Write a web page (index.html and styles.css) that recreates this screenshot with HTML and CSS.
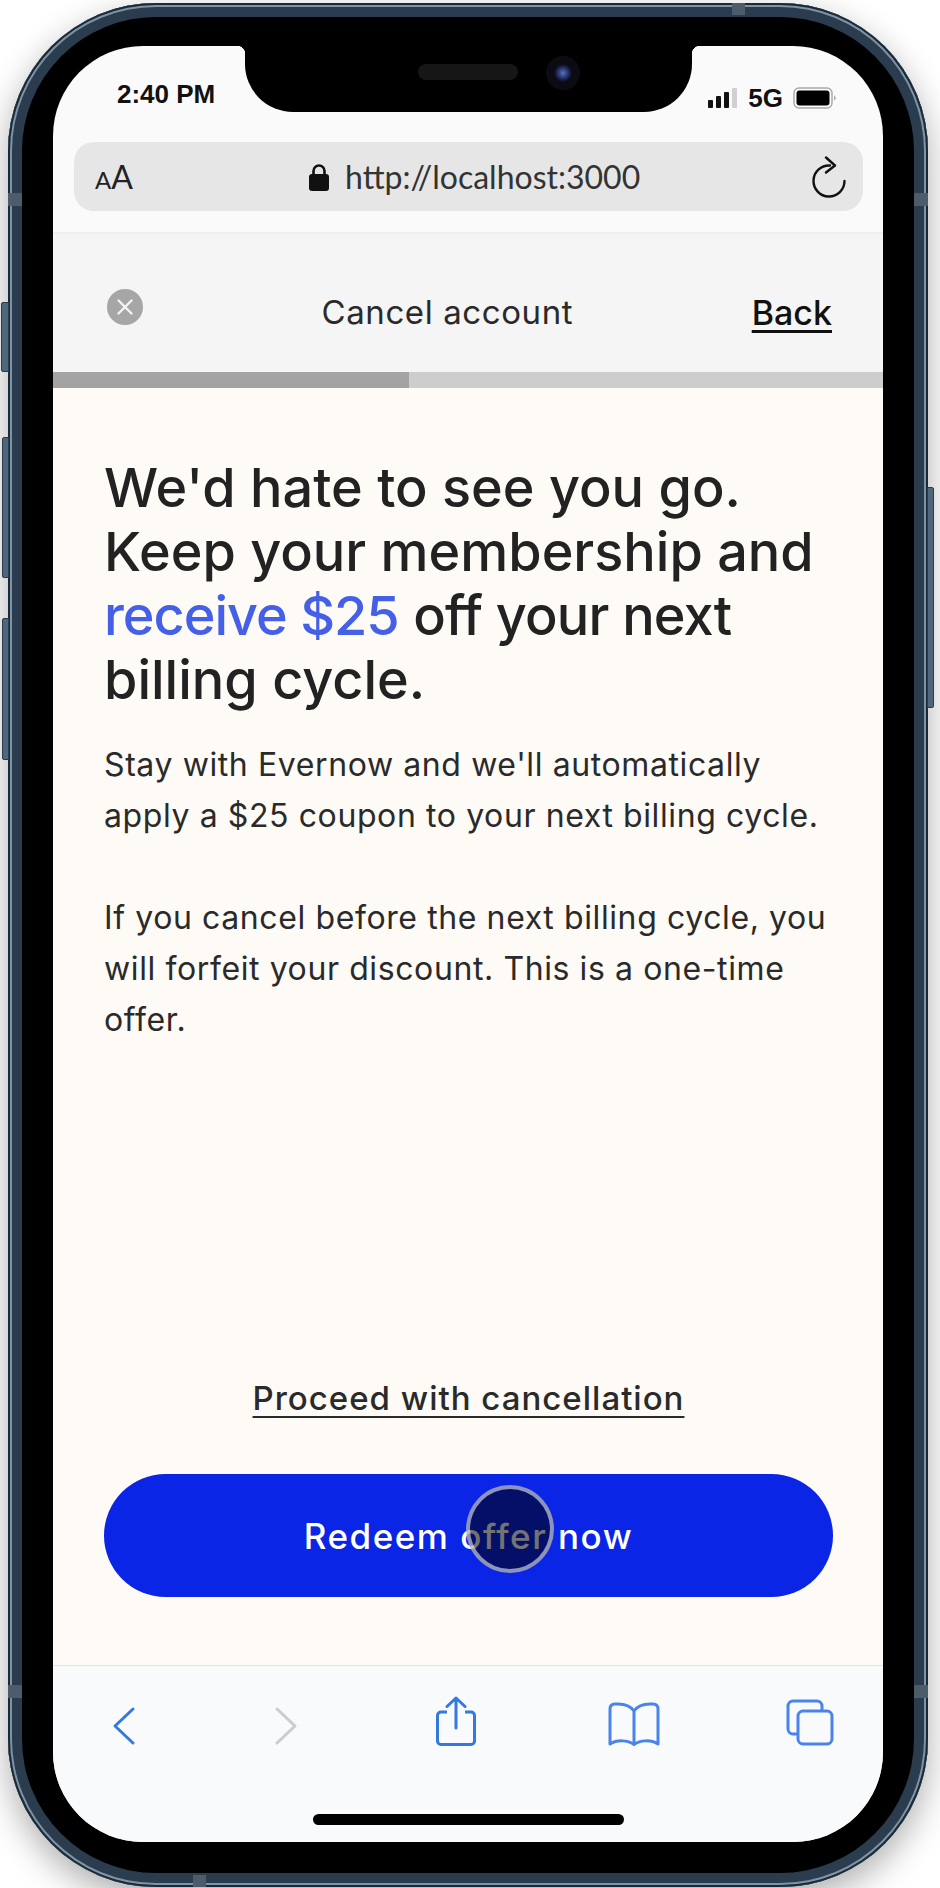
FILE: index.html
```html
<!DOCTYPE html>
<html lang="en">
<head>
  <meta charset="UTF-8">
  <meta name="viewport" content="width=device-width, initial-scale=1.0">
  <title>Cancel account</title>
  <link rel="stylesheet" href="styles.css">
</head>
<body>
  <div class="phone">
    <!-- Hardware buttons and antenna bands -->
    <span class="side-btn mute"></span>
    <span class="side-btn vol-up"></span>
    <span class="side-btn vol-down"></span>
    <span class="side-btn power"></span>
    <span class="band band-top"></span>
    <span class="band band-bottom"></span>
    <span class="band band-left-a"></span>
    <span class="band band-left-b"></span>
    <span class="band band-right-a"></span>
    <span class="band band-right-b"></span>

    <div class="screen">
      <div class="notch">
        <span class="speaker"></span>
        <span class="camera"></span>
      </div>

      <div class="browser-top">
        <div class="status-bar">
          <span class="clock">2:40 PM</span>
          <div class="status-icons">
            <svg class="signal" width="30" height="20" viewBox="0 0 30 20">
              <rect x="0" y="12" width="5" height="8" rx="1" fill="#111"/>
              <rect x="8" y="8" width="5" height="12" rx="1" fill="#111"/>
              <rect x="16" y="4" width="5" height="16" rx="1" fill="#111"/>
              <rect x="24" y="0" width="5" height="20" rx="1" fill="#d0d0d0"/>
            </svg>
            <span class="network">5G</span>
            <svg class="battery" width="44" height="22" viewBox="0 0 44 22">
              <rect x="1" y="1" width="38" height="20" rx="5" fill="none" stroke="#aaa" stroke-width="1.5"/>
              <rect x="3.5" y="3.5" width="33" height="15" rx="3" fill="#000"/>
              <path d="M41 8 L43 11 L41 14 Z" fill="#aaa"/>
            </svg>
          </div>
        </div>
        <div class="url-bar">
          <span class="aa"><small>A</small>A</span>
          <div class="address">
            <svg class="lock" width="20" height="28" viewBox="0 0 20 28">
              <path d="M4.5 12 V8 a5.5 5.5 0 0 1 11 0 V12" fill="none" stroke="#111" stroke-width="2.6"/>
              <rect x="0" y="11" width="20" height="17" rx="3" fill="#111"/>
            </svg>
            <span>http://localhost:3000</span>
          </div>
          <svg class="reload" width="36" height="42" viewBox="0 0 36 42">
            <path d="M19 9.5 A15.5 15.5 0 1 0 33.5 25" fill="none" stroke="#111" stroke-width="2.4" stroke-linecap="round"/>
            <path d="M15 1.5 L24 9.5 L15 16.5" fill="none" stroke="#111" stroke-width="2.4" stroke-linecap="round" stroke-linejoin="round"/>
          </svg>
        </div>
      </div>

      <header class="app-header">
        <svg class="close-icon" width="36" height="36" viewBox="0 0 36 36">
          <circle cx="18" cy="18" r="18" fill="#a6a6a6"/>
          <path d="M11.5 11.5 L24.5 24.5 M24.5 11.5 L11.5 24.5" stroke="#f4f4f4" stroke-width="2.4" stroke-linecap="round"/>
        </svg>
        <span class="app-title">Cancel account</span>
        <a class="back-link" href="#">Back</a>
      </header>

      <div class="progress"><div class="progress-fill"></div></div>

      <main class="offer">
        <h1>We'd hate to see you go. Keep your membership and <span class="accent">receive $25</span> <span class="tight">off your next</span> billing cycle.</h1>
        <p>Stay with Evernow and we'll automatically apply a $25 coupon to your next billing cycle.</p>
        <p>If you cancel before the next billing cycle, you will forfeit your discount. This is a one-time offer.</p>
        <div class="actions">
          <a class="proceed" href="#">Proceed with cancellation</a>
          <a class="redeem" href="#">Redeem offer now<span class="touch-dot"></span></a>
        </div>
      </main>

      <footer class="toolbar">
        <div class="toolbar-icons">
          <svg width="24" height="40" viewBox="0 0 24 40">
            <path d="M21 3 L3 20 L21 37" fill="none" stroke="#3478e0" stroke-width="3" stroke-linecap="round" stroke-linejoin="round"/>
          </svg>
          <svg width="24" height="40" viewBox="0 0 24 40">
            <path d="M3 3 L21 20 L3 37" fill="none" stroke="#cccccc" stroke-width="3" stroke-linecap="round" stroke-linejoin="round"/>
          </svg>
          <svg width="40" height="50" viewBox="0 0 40 50">
            <path d="M11 16 H5 a3.500 3.500 0 0 0 -3.500 3.500 V45 a3.500 3.500 0 0 0 3.500 3.500 H35 a3.500 3.500 0 0 0 3.500 -3.500 V19.500 a3.500 3.500 0 0 0 -3.500 -3.500 H29" fill="none" stroke="#3478e0" stroke-width="3"/>
            <path d="M20 32 V2.500 M11 10.500 L20 2 L29 10.500" fill="none" stroke="#3478e0" stroke-width="3" stroke-linecap="round" stroke-linejoin="round"/>
          </svg>
          <svg width="52" height="44" viewBox="0 0 52 44">
            <path d="M26 9 C22 3 14 1.500 7 2 C4 2.200 2 4 2 7 V42 C9 37.500 20 38 26 42.500 C32 38 43 37.500 50 42 V7 C50 4 48 2.200 45 2 C38 1.500 30 3 26 9 Z M26 9 V42.500" fill="none" stroke="#4a84ea" stroke-width="3" stroke-linejoin="round"/>
          </svg>
          <svg width="48" height="47" viewBox="0 0 48 47">
            <path d="M36 12 V7 a5 5 0 0 0 -5 -5 H7 a5 5 0 0 0 -5 5 V30 a5 5 0 0 0 5 5 H12" fill="none" stroke="#4a84ea" stroke-width="3"/>
            <rect x="12" y="12" width="34" height="33" rx="5" fill="none" stroke="#4a84ea" stroke-width="3"/>
          </svg>
        </div>
        <div class="home-indicator"></div>
      </footer>
    </div>
  </div>
</body>
</html>
```

FILE: styles.css
```css
/* Reset and basic styles */
body {
  margin: 0;
  width: 940px;
  height: 1888px;
  overflow: hidden;
  background-color: #fff;
  font-family: 'Inter', 'Liberation Sans', sans-serif;
  color: #222;
}

a {
  color: inherit;
  text-decoration-thickness: 2px;
  text-underline-offset: 6px;
}

/* Device frame */
.phone {
  position: relative;
  box-sizing: border-box;
  width: 920px;
  height: 1884px;
  margin: 3px 0 0 8px;
  padding: 43px 45px 45px 45px;
  border-radius: 148px;
  background-color: #000;
  box-shadow:
    inset 0 0 0 2px #1c2a38,
    inset 0 0 0 4px #7d93a6,
    inset 0 0 0 14px #2a3c4e,
    0 12px 34px rgba(0, 0, 0, 0.32);
}

.side-btn {
  position: absolute;
  background-color: #50677b;
  border: 1px solid #2a3c4e;
  box-sizing: border-box;
  border-radius: 2px 0 0 2px;
}

.mute { left: -7px; top: 299px; width: 8px; height: 70px; }
.vol-up { left: -6px; top: 434px; width: 7px; height: 141px; }
.vol-down { left: -6px; top: 615px; width: 7px; height: 142px; }
.power { right: -6px; top: 484px; width: 7px; height: 221px; border-radius: 0 2px 2px 0; }

.band {
  position: absolute;
  background-color: #4c5c6b;
}

.band-top { left: 724px; top: 0; width: 13px; height: 12px; }
.band-bottom { left: 185px; bottom: 0; width: 13px; height: 12px; }
.band-left-a { left: 0; top: 190px; width: 14px; height: 13px; }
.band-left-b { left: 0; top: 1682px; width: 14px; height: 13px; }
.band-right-a { right: 0; top: 190px; width: 14px; height: 13px; }
.band-right-b { right: 0; top: 1682px; width: 14px; height: 13px; }

/* Screen */
.screen {
  position: relative;
  display: flex;
  flex-direction: column;
  height: 100%;
  border-radius: 90px;
  overflow: hidden;
  background-color: #fafafa;
}

.notch {
  position: absolute;
  left: 192px;
  top: 0;
  width: 447px;
  height: 66px;
  background-color: #000;
  border-radius: 0 0 48px 48px;
}

.notch::before,
.notch::after {
  content: "";
  position: absolute;
  top: 0;
  width: 8px;
  height: 8px;
}

.notch::before {
  left: -8px;
  background: radial-gradient(circle at 0 100%, transparent 8px, #000 8.500px);
}

.notch::after {
  right: -8px;
  background: radial-gradient(circle at 100% 100%, transparent 8px, #000 8.500px);
}

.speaker {
  position: absolute;
  left: 173px;
  top: 18px;
  width: 100px;
  height: 16px;
  border-radius: 8px;
  background-color: #161616;
}

.camera {
  position: absolute;
  left: 301px;
  top: 10px;
  width: 34px;
  height: 34px;
  border-radius: 50%;
  background: radial-gradient(circle, #5a72bd 0, #26346f 5px, #0a0b14 9px, #0c0c10 17px);
}

/* Browser chrome */
.browser-top {
  flex: 0 0 188px;
  box-sizing: border-box;
  border-bottom: 2px solid #eeeeee;
}

.status-bar {
  display: flex;
  justify-content: space-between;
  align-items: center;
  height: 96px;
  padding: 0 46px 0 64px;
}

.clock {
  font-family: 'Liberation Sans', sans-serif;
  font-size: 26px;
  font-weight: 700;
  color: #111;
}

.status-icons {
  display: flex;
  align-items: center;
  gap: 10px;
  margin-top: 8px;
}

.network {
  font-family: 'Liberation Sans', sans-serif;
  font-size: 26px;
  font-weight: 700;
  color: #111;
}

.url-bar {
  position: relative;
  display: flex;
  align-items: center;
  justify-content: space-between;
  height: 69px;
  margin: 0 20px 0 21px;
  padding: 0 16px 0 21px;
  border-radius: 20px;
  background-color: #e6e6e6;
}

.aa {
  font-family: 'Lato', sans-serif;
  font-size: 32px;
  font-weight: 400;
  color: #222;
}

.aa small {
  font-size: 24px;
}

.address {
  position: absolute;
  left: 235px;
  top: 0;
  height: 100%;
  display: flex;
  align-items: center;
  gap: 16px;
  font-family: 'Lato', sans-serif;
  font-size: 32px;
  color: #333;
}

.lock,
.reload {
  display: block;
}

/* App header */
.app-header {
  flex: 0 0 138px;
  box-sizing: border-box;
  display: flex;
  align-items: center;
  justify-content: space-between;
  padding: 18px 51px 0 54px;
  background-color: #f5f5f5;
}

.close-icon {
  margin-top: -10px;
}

.app-title {
  font-size: 33px;
  letter-spacing: 0.6px;
  color: #2a2a2a;
}

.back-link {
  font-size: 34px;
  font-weight: 500;
  color: #111;
  text-decoration-thickness: 3px;
  text-underline-offset: 5px;
}

.progress {
  flex: 0 0 16px;
  background-color: #cdcdcd;
}

.progress-fill {
  width: 356px;
  height: 100%;
  background-color: #a3a3a3;
}

/* Offer */
.offer {
  flex: 1;
  display: flex;
  flex-direction: column;
  padding: 68px 50px 68px 51px;
  background-color: #fefbf7;
  border-bottom: 1px solid #e4e2df;
}

h1 {
  margin: 0 0 27px;
  font-size: 54px;
  line-height: 64px;
  font-weight: 540;
  color: #222;
}

.accent {
  color: #4560e6;
  letter-spacing: -1px;
}

.tight {
  letter-spacing: -0.800px;
}

.offer p {
  margin: 0 0 51px;
  font-size: 32px;
  line-height: 51px;
  letter-spacing: 0.600px;
  color: #2a2a2a;
}

.actions {
  margin-top: auto;
  display: flex;
  flex-direction: column;
  align-items: center;
  gap: 56px;
}

.proceed {
  font-size: 33px;
  font-weight: 500;
  letter-spacing: 1px;
  color: #2a2a2a;
}

.redeem {
  position: relative;
  align-self: stretch;
  display: flex;
  align-items: center;
  justify-content: center;
  height: 123px;
  border-radius: 62px;
  background-color: #0b25e6;
  color: #fff;
  font-size: 35px;
  font-weight: 500;
  letter-spacing: 1.5px;
  text-decoration: none;
}

.touch-dot {
  position: absolute;
  left: 362px;
  top: 11px;
  box-sizing: border-box;
  width: 88px;
  height: 88px;
  border: 4px solid rgba(255, 255, 255, 0.55);
  border-radius: 50%;
  background-color: rgba(0, 0, 0, 0.55);
}

/* Bottom toolbar */
.toolbar {
  flex: 0 0 176px;
  position: relative;
  background-color: #f9fafb;
}

.toolbar-icons {
  display: grid;
  grid-template-columns: 162px 162px 172px 178px auto;
  justify-items: start;
  align-items: end;
  height: 80px;
  padding: 0 0 0 59px;
}

.home-indicator {
  position: absolute;
  left: 260px;
  top: 148px;
  width: 311px;
  height: 11px;
  border-radius: 6px;
  background-color: #000;
}
```
